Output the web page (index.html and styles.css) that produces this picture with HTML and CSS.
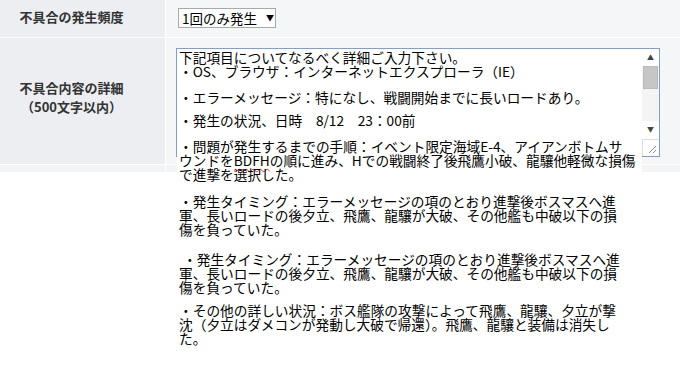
FILE: index.html
```html
<!DOCTYPE html>
<html lang="ja">
<head>
  <meta charset="UTF-8" />
  <title>不具合報告</title>
  <link rel="stylesheet" href="styles.css">
</head>
<body>

  <div class="form">
    <div class="label row-freq">不具合の発生頻度</div>
    <div class="field row-freq">
      <div class="select">1回のみ発生<span class="arrow">▼</span></div>
    </div>

    <div class="label row-detail">不具合内容の詳細<br>（500文字以内）</div>
    <div class="field row-detail">
      <div class="textarea">
        <div class="text">
          <p>
            <span class="ln">下記項目についてなるべく詳細ご入力下さい。</span>
            <span class="ln">・OS、ブラウザ：インターネットエクスプローラ（IE）</span>
          </p>
          <p class="gap-a">
            <span class="ln">・エラーメッセージ：特になし、戦闘開始までに長いロードあり。</span>
          </p>
          <p class="gap-b">
            <span class="ln">・発生の状況、日時　8/12　23：00前</span>
          </p>
          <p class="gap-a">
            <span class="ln">・問題が発生するまでの手順：イベント限定海域E-4、アイアンボトムサ</span>
            <span class="ln">ウンドを<span class="typo">BDFH</span>の順に進み、Hでの戦闘終了後飛鷹小破、龍驤他軽微な損傷</span>
            <span class="ln">で進撃を選択した。</span>
          </p>
          <p class="gap-c">
            <span class="ln">・発生タイミング：エラーメッセージの項のとおり進撃後ボスマスへ進</span>
            <span class="ln">軍、長いロードの後夕立、飛鷹、龍驤が大破、その他艦も中破以下の損</span>
            <span class="ln">傷を負っていた。</span>
          </p>
          <p class="gap-d">
            <span class="ln indent">・発生タイミング：エラーメッセージの項のとおり進撃後ボスマスへ進</span>
            <span class="ln">軍、長いロードの後夕立、飛鷹、龍驤が大破、その他艦も中破以下の損</span>
            <span class="ln">傷を負っていた。</span>
          </p>
          <p class="gap-b">
            <span class="ln">・その他の詳しい状況：ボス艦隊の攻撃によって飛鷹、龍驤、夕立が撃</span>
            <span class="ln">沈（夕立はダメコンが発動し大破で帰還）。飛鷹、龍驤と装備は消失し</span>
            <span class="ln">た。</span>
          </p>
        </div>
        <div class="scrollbar">
          <div class="sb-btn">▲</div>
          <div class="sb-track"><div class="sb-thumb"></div></div>
          <div class="sb-btn">▼</div>
          <div class="grip">
            <svg width="15" height="15" viewBox="0 0 15 15">
              <path d="M13 6 L6 13 M13 10 L10 13" stroke="#8a8a8a" stroke-width="1" fill="none" />
            </svg>
          </div>
        </div>
      </div>
    </div>

    <div class="label row-next"></div>
    <div class="field row-next"></div>
  </div>

</body>
</html>
```

FILE: styles.css
```css
html, body {
  min-height: 377px;
}

body {
  margin: 0;
  background-color: #ffffff;
  font-family: 'Noto Sans CJK JP', sans-serif;
  color: #000;
}

.form {
  display: grid;
  grid-template-columns: 165px 1fr;
  column-gap: 1px;
  row-gap: 1px;
  background-color: #ffffff;
}

.label {
  background-color: #eceef1;
  color: #333;
  font-weight: bold;
  font-size: 13px;
  line-height: 19px;
  text-align: center;
  padding-right: 22px;
  display: flex;
  align-items: center;
  justify-content: center;
}

.field {
  background-color: #f5f6f8;
  padding-left: 10px;
  display: flex;
  align-items: center;
}

.row-freq {
  height: 37px;
}

.row-freq.label {
  padding-bottom: 4px;
  height: 33px;
}

.row-detail {
  height: 126px;
}

.row-detail.label {
  padding-bottom: 8px;
  height: 118px;
}

.row-detail.field {
  align-items: flex-start;
  padding-top: 10px;
  height: 116px;
}

.row-next {
  height: 7px;
  background-color: #f3f4f6;
}

.select {
  box-sizing: border-box;
  width: 98px;
  height: 20px;
  margin-top: -2px;
  margin-left: 2px;
  border: 1px solid #a9a9a9;
  background: #fff;
  font-size: 13.5px;
  line-height: 18px;
  padding-left: 3px;
  color: #000;
  white-space: nowrap;
  display: flex;
  align-items: center;
}

.select .arrow {
  font-size: 8px;
  margin-left: 9px;
}

.textarea {
  position: relative;
  z-index: 1;
  box-sizing: border-box;
  width: 484px;
  height: 109px;
  border: 1px solid #7f9fcf;
  background: #fff;
  display: flex;
}

.text {
  flex: 1;
  align-self: flex-start;
  background: #fff;
  padding: 1px 2px 8px 2px;
  font-size: 13.7px;
  white-space: nowrap;
}

.text p {
  margin: 0;
}

.ln {
  display: block;
  height: 14px;
  line-height: 14px;
}

.ln.indent {
  padding-left: 4px;
}

.gap-a { margin-top: 12px !important; }
.gap-b { margin-top: 9px !important; }
.gap-c { margin-top: 13px !important; }
.gap-d { margin-top: 16px !important; }

.typo {
  text-decoration: underline wavy #e03030;
  text-decoration-thickness: 1px;
  text-underline-offset: 2px;
}

.scrollbar {
  width: 17px;
  display: flex;
  flex-direction: column;
  background: #fff;
}

.sb-btn {
  height: 17px;
  font-size: 7px;
  line-height: 17px;
  text-align: center;
  color: #444;
}

.sb-track {
  height: 55px;
  background: #f4f4f4;
  padding: 0 1px;
}

.sb-thumb {
  height: 23px;
  background: #c6c6c6;
  border: 1px solid #bbbbbb;
  box-sizing: border-box;
}

.grip {
  height: 17px;
  margin-top: auto;
  border-top: 1px solid #dcdcdc;
  border-left: 1px solid #dcdcdc;
  box-sizing: border-box;
}

.grip svg {
  display: block;
}
```
